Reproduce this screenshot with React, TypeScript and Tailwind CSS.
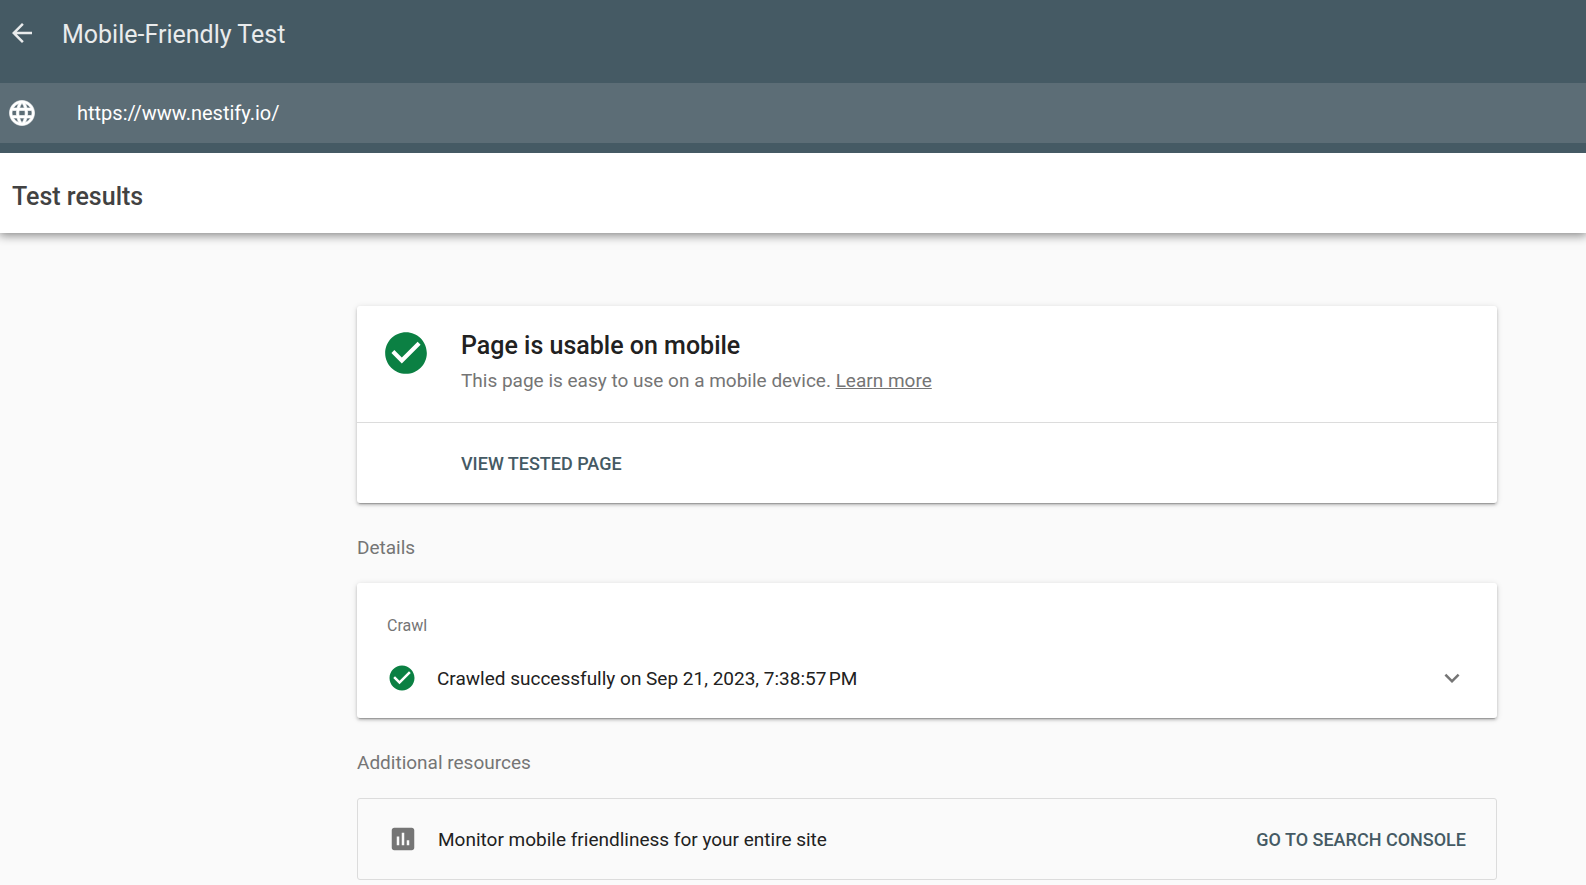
import React from "react";
import { MdArrowBack, MdAssessment, MdCheckCircle, MdExpandMore } from "react-icons/md";

const cardShadow =
  "shadow-[0_3px_1px_-2px_rgba(0,0,0,0.2),0_2px_3px_0_rgba(0,0,0,0.2),0_1px_6px_0_rgba(0,0,0,0.12)]";

function GlobeIcon() {
  return (
    <svg viewBox="0 0 24 24" className="size-[30px]" fill="currentColor" stroke="currentColor" strokeWidth="0.5" aria-hidden="true">
      <path d="M11.99 2C6.47 2 2 6.48 2 12s4.47 10 9.99 10C17.52 22 22 17.52 22 12S17.52 2 11.99 2zm6.93 6h-2.95a15.65 15.65 0 0 0-1.38-3.56A8.03 8.03 0 0 1 18.92 8zM12 4.04c.83 1.2 1.48 2.53 1.91 3.96h-3.82c.43-1.43 1.08-2.76 1.91-3.96zM4.26 14C4.1 13.36 4 12.69 4 12s.1-1.36.26-2h3.38c-.08.66-.14 1.32-.14 2s.06 1.34.14 2H4.26zm.82 2h2.95c.32 1.25.78 2.45 1.38 3.56A7.987 7.987 0 0 1 5.08 16zm2.95-8H5.08a7.987 7.987 0 0 1 4.33-3.56A15.65 15.65 0 0 0 8.03 8zM12 19.96c-.83-1.2-1.48-2.53-1.91-3.96h3.82c-.43 1.43-1.08 2.76-1.91 3.96zM14.34 14H9.66c-.09-.66-.16-1.32-.16-2s.07-1.35.16-2h4.68c.09.65.16 1.32.16 2s-.07 1.34-.16 2zm.25 5.56c.6-1.11 1.06-2.31 1.38-3.56h2.95a8.03 8.03 0 0 1-4.33 3.56zM16.36 14c.08-.66.14-1.32.14-2s-.06-1.34-.14-2h3.38c.16.64.26 1.31.26 2s-.1 1.36-.26 2h-3.38z" />
    </svg>
  );
}

function Header() {
  return (
    <header className="relative bg-[#455a64] pb-2.5">
      <div className="flex h-[83px] items-start gap-[25px] pl-[7px] pt-[18px]">
        <button type="button" aria-label="Back" className="text-[#e9ebec]">
          <MdArrowBack className="size-[30px]" />
        </button>
        <h1 className="text-[25px] leading-[34px] text-[#e9ebec]">Mobile-Friendly Test</h1>
      </div>
      <form className="flex h-[60px] items-center gap-10 bg-[#5c6d76] pl-[7px] text-white" onSubmit={(e) => e.preventDefault()}>
        <label htmlFor="url" aria-label="Page address">
          <GlobeIcon />
        </label>
        <input
          id="url"
          type="text"
          defaultValue="https://www.nestify.io/"
          className="h-full min-w-0 flex-1 bg-transparent text-[20px] outline-none"
        />
      </form>
    </header>
  );
}

function ResultCard() {
  return (
    <section className={`rounded-[3px] bg-white ${cardShadow}`}>
      <div className="flex h-[117px] gap-[30px] border-b border-[#dcdcdc] pl-6 pt-[22px]">
        <MdCheckCircle className="size-[50px] shrink-0 text-[#0b8043]" />
        <div className="pt-0.5">
          <h2 className="text-[25px] font-medium leading-8 text-[#212121]">Page is usable on mobile</h2>
          <p className="pt-[5px] text-[19px] leading-7 text-[#757575]">
            This page is easy to use on a mobile device.{" "}
            <a href="#learn-more" className="underline">
              Learn more
            </a>
          </p>
        </div>
      </div>
      <div className="flex h-20 items-center pl-[104px]">
        <button type="button" className="text-[18px] font-medium text-[#455a64]">
          VIEW TESTED PAGE
        </button>
      </div>
    </section>
  );
}

function SectionTitle({ children }: { children: React.ReactNode }) {
  return <h2 className="flex h-20 items-center pt-2.5 text-[19px] text-[#757575]">{children}</h2>;
}

function CrawlCard() {
  return (
    <section className={`rounded-[3px] bg-white px-[30px] pb-[25px] pt-[31px] ${cardShadow}`}>
      <h3 className="text-[16px] leading-6 text-[#757575]">Crawl</h3>
      <div className="flex items-center pt-[25px] text-[19px] text-[#212121]">
        <MdCheckCircle className="size-[30px] text-[#0b8043]" />
        <p className="flex-1 pl-5 pt-0.5 leading-7">Crawled successfully on Sep 21, 2023, 7:38:57{"\u202f"}PM</p>
        <button type="button" aria-label="Show crawl details" className="text-[#757575]">
          <MdExpandMore className="size-[30px]" />
        </button>
      </div>
    </section>
  );
}

function ResourceCard() {
  return (
    <section className="flex h-[82px] items-center justify-between rounded-[3px] border border-[#dcdcdc] px-[30px] text-[#212121]">
      <div className="flex items-center">
        <MdAssessment className="size-[30px] text-[#757575]" />
        <p className="pl-5 pt-0.5 text-[19px] leading-7">Monitor mobile friendliness for your entire site</p>
      </div>
      <a href="#search-console" className="text-[18px] font-medium text-[#455a64]">
        GO TO SEARCH CONSOLE
      </a>
    </section>
  );
}

export default function App() {
  return (
    <div className="min-h-screen bg-[#fafafa] pb-[5px] font-[Roboto,sans-serif]">
      <Header />
      <div className="flex h-20 items-center bg-white pl-3 pt-2 shadow-[0_1px_10px_1px_rgba(0,0,0,0.5)]">
        <h2 className="text-[25px] font-medium text-[#424242]">Test results</h2>
      </div>
      <main className="pl-[357px] pr-[89px] pt-[73px]">
        <ResultCard />
        <SectionTitle>Details</SectionTitle>
        <CrawlCard />
        <SectionTitle>Additional resources</SectionTitle>
        <ResourceCard />
      </main>
    </div>
  );
}
